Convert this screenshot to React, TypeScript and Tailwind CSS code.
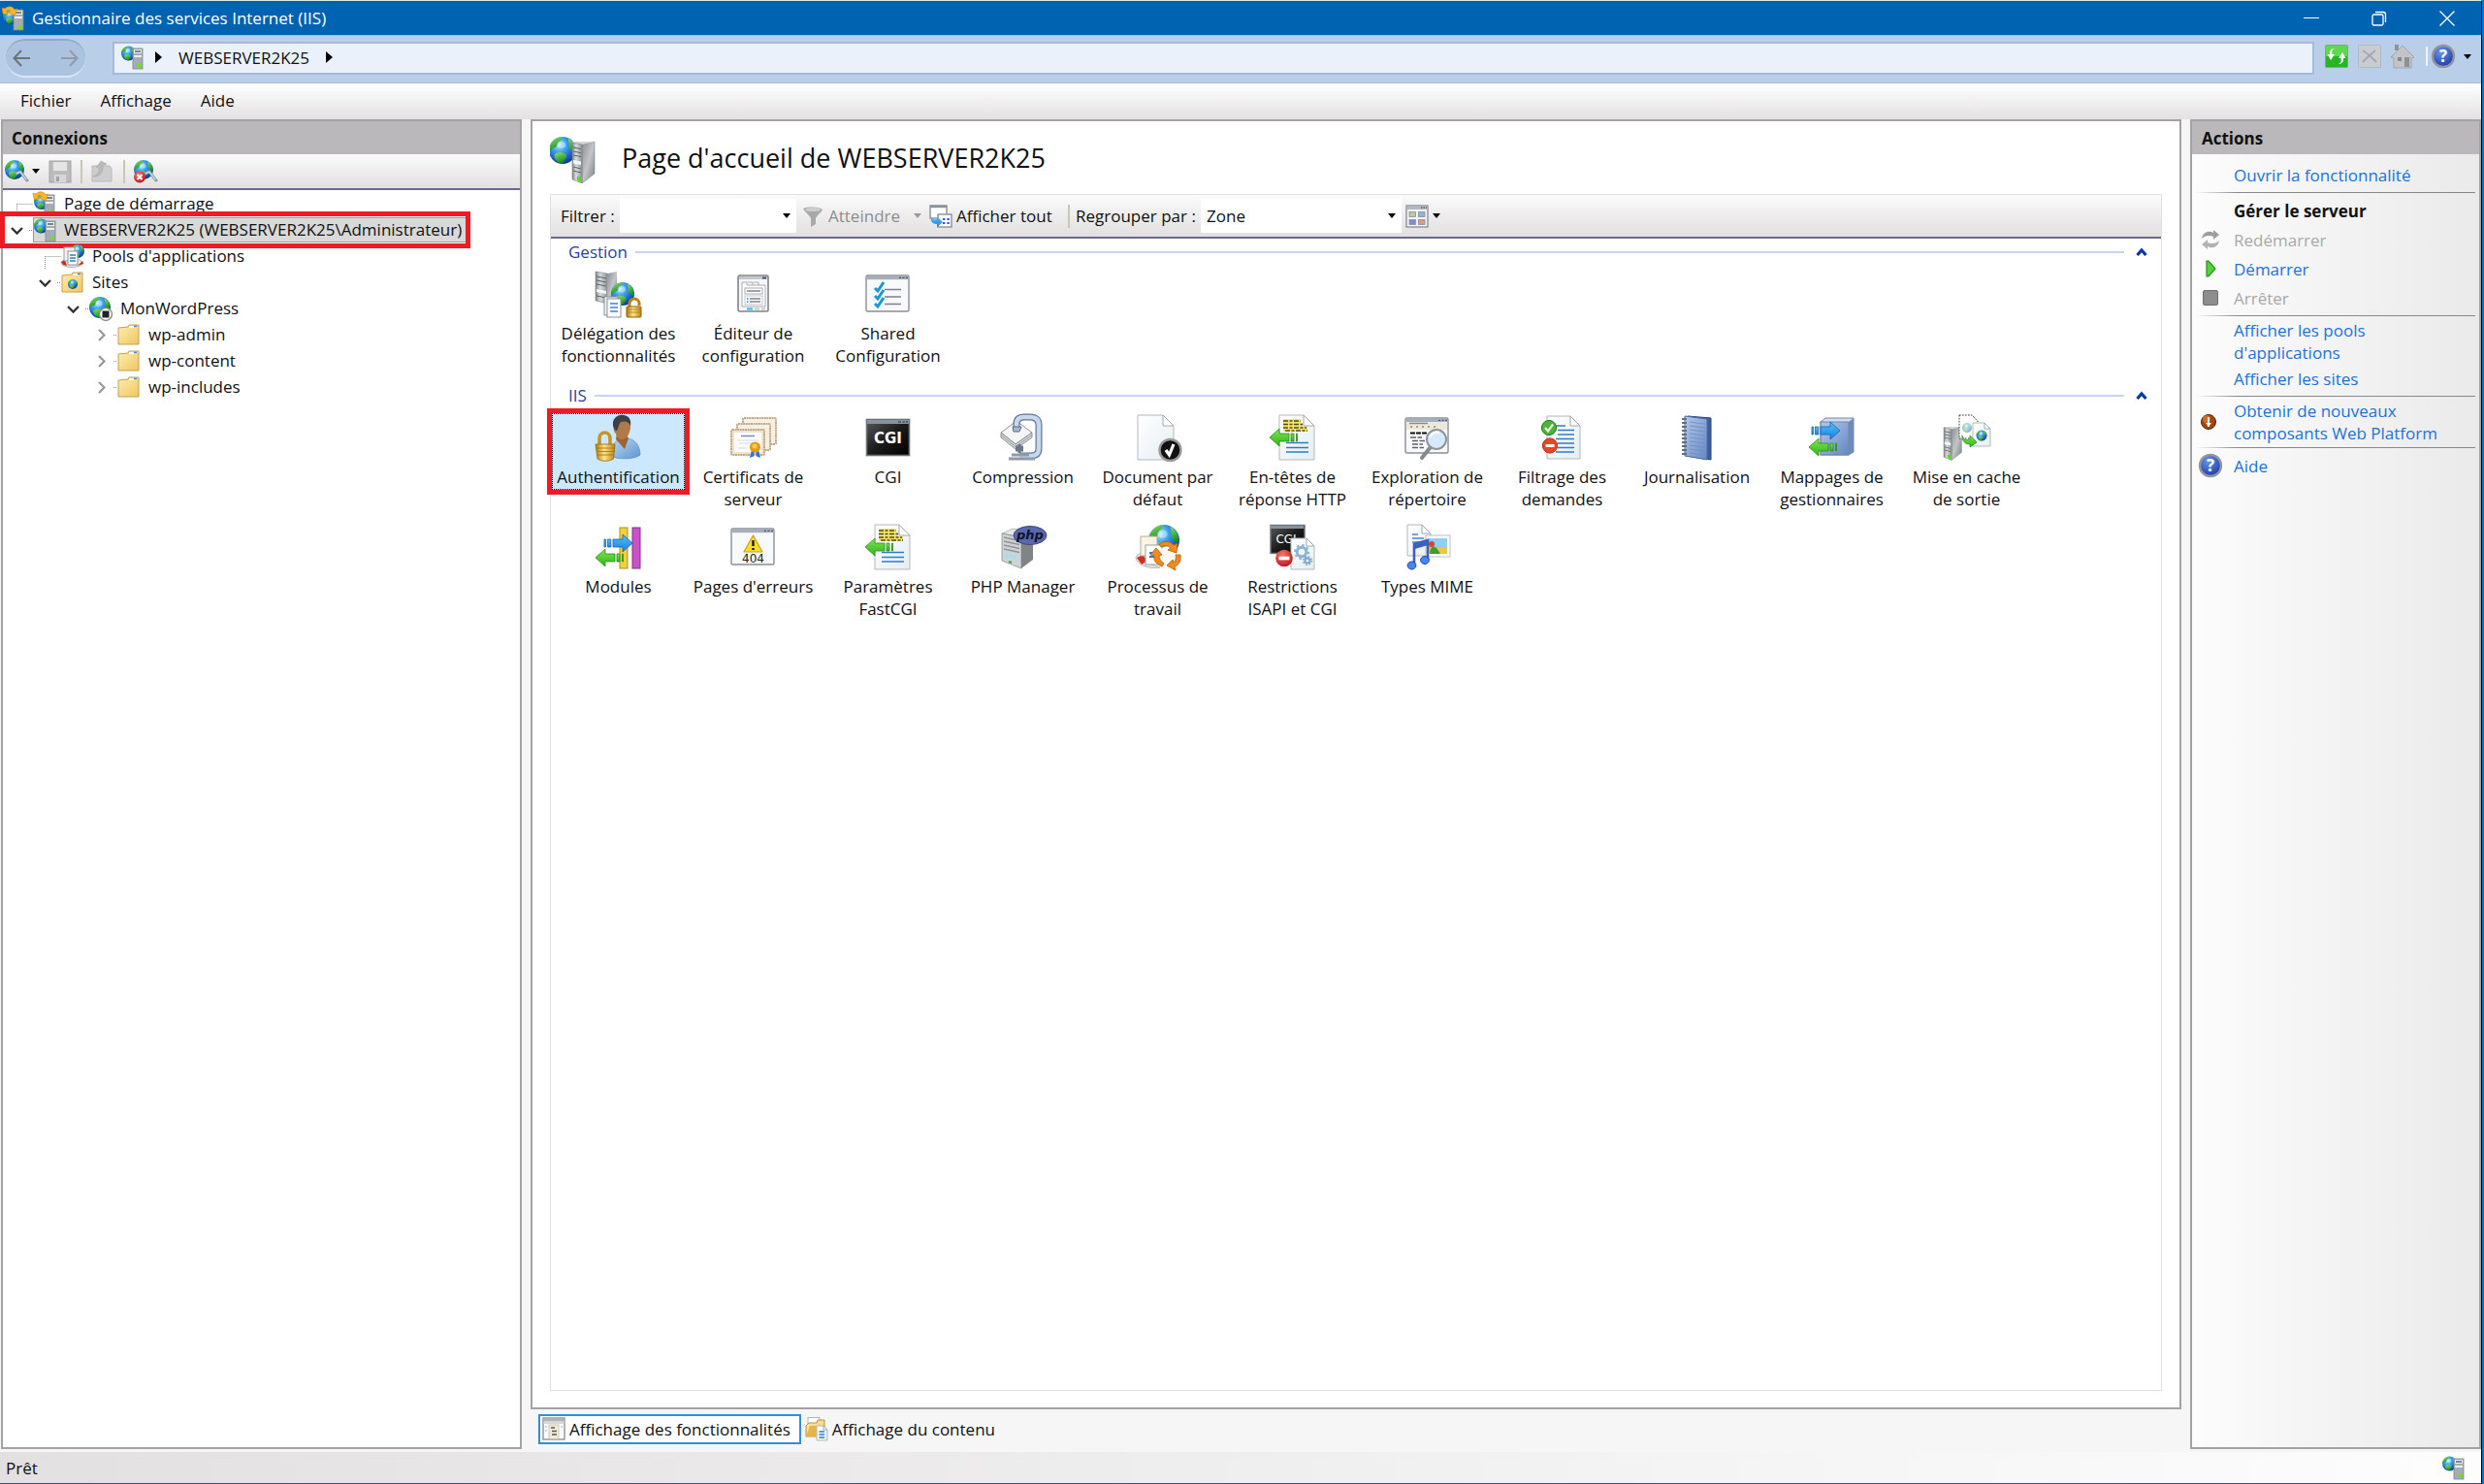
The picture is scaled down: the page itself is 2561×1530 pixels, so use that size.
import { useState } from "react";
import type { ReactNode } from "react";

type IconProps = { className?: string };

/* ---------- shared drawing parts ---------- */

function SharedGradients() {
  return (
    <svg width="0" height="0" className="absolute" aria-hidden="true">
      <defs>
        <radialGradient id="sea" cx="0.38" cy="0.3" r="0.75">
          <stop offset="0" stopColor="#b5ecff" />
          <stop offset="0.35" stopColor="#3fa4ee" />
          <stop offset="0.75" stopColor="#1a58c4" />
          <stop offset="1" stopColor="#0c3488" />
        </radialGradient>
        <linearGradient id="land" x1="0" y1="0" x2="0.4" y2="1">
          <stop offset="0" stopColor="#8fe070" />
          <stop offset="1" stopColor="#16901c" />
        </linearGradient>
        <linearGradient id="metalFront" x1="0" y1="0" x2="1" y2="0">
          <stop offset="0" stopColor="#7f8588" />
          <stop offset="0.4" stopColor="#d9dddf" />
          <stop offset="1" stopColor="#8e9498" />
        </linearGradient>
        <linearGradient id="metalSide" x1="0" y1="0" x2="1" y2="1">
          <stop offset="0" stopColor="#8b8e90" />
          <stop offset="0.5" stopColor="#c3c6c8" />
          <stop offset="1" stopColor="#7b7e80" />
        </linearGradient>
        <linearGradient id="gold" x1="0" y1="0" x2="1" y2="0">
          <stop offset="0" stopColor="#b07a10" />
          <stop offset="0.45" stopColor="#ffe58a" />
          <stop offset="1" stopColor="#b98416" />
        </linearGradient>
        <linearGradient id="folder" x1="0" y1="0" x2="1" y2="1">
          <stop offset="0" stopColor="#fdeeb0" />
          <stop offset="1" stopColor="#f0c660" />
        </linearGradient>
        <linearGradient id="greenArrow" x1="0" y1="0" x2="0" y2="1">
          <stop offset="0" stopColor="#7fe84c" />
          <stop offset="1" stopColor="#2fb31c" />
        </linearGradient>
        <linearGradient id="blueArrow" x1="0" y1="0" x2="0" y2="1">
          <stop offset="0" stopColor="#4bc4ff" />
          <stop offset="1" stopColor="#1c7fdc" />
        </linearGradient>
        <linearGradient id="paper" x1="0" y1="0" x2="1" y2="1">
          <stop offset="0" stopColor="#ffffff" />
          <stop offset="1" stopColor="#e4eef2" />
        </linearGradient>
        <linearGradient id="darkScreen" x1="0" y1="0" x2="1" y2="1">
          <stop offset="0" stopColor="#5a5a5a" />
          <stop offset="0.5" stopColor="#1c1c1c" />
          <stop offset="1" stopColor="#000000" />
        </linearGradient>
        <linearGradient id="bookCover" x1="0" y1="0" x2="1" y2="1">
          <stop offset="0" stopColor="#b3c8ea" />
          <stop offset="1" stopColor="#6487c2" />
        </linearGradient>
        <radialGradient id="helpBall" cx="0.4" cy="0.3" r="0.8">
          <stop offset="0" stopColor="#6b95ee" />
          <stop offset="1" stopColor="#12319e" />
        </radialGradient>
        <radialGradient id="redBall" cx="0.4" cy="0.3" r="0.8">
          <stop offset="0" stopColor="#f07a66" />
          <stop offset="1" stopColor="#b80d14" />
        </radialGradient>
        <linearGradient id="shirt" x1="0" y1="0" x2="1" y2="1">
          <stop offset="0" stopColor="#b9dcf8" />
          <stop offset="1" stopColor="#5f93cf" />
        </linearGradient>
      </defs>
    </svg>
  );
}

function GlobeShape({ cx, cy, r }: { cx: number; cy: number; r: number }) {
  return (
    <g transform={`translate(${cx} ${cy}) scale(${r / 10})`}>
      <circle r="10" fill="url(#sea)" />
      <path
        d="M-8.6 -4.6C-6.6 -8.2 -3.2 -9.7 0 -9.8C-0.8 -7.6 -1.6 -6.8 -3 -6C-3.6 -3.4 -4.6 -1.8 -7.2 -1.6C-8 -0.6 -9 1.2 -9.8 0C-9.8 -2 -9.4 -3.4 -8.6 -4.6Z"
        fill="url(#land)"
      />
      <path d="M-6 3C-3 0.6 0.6 1.2 2.6 3.2C3.6 5.6 1 7.4 0 9.6C-3.6 9.2 -6 7.4 -6 3Z" fill="url(#land)" />
      <path d="M4 -8.8C7.4 -7.2 9.6 -3.8 9.8 0C8.8 2.6 7.6 1 6 -0.4C4.2 -2.4 5.4 -4.6 4 -8.8Z" fill="url(#land)" />
      <ellipse cx="-1" cy="-4" rx="3.4" ry="2.6" fill="#fff" opacity="0.35" />
    </g>
  );
}

// tower: front face with drive slots and a green power light, side face to the right
function TowerShape({ x, y, s = 1 }: { x: number; y: number; s?: number }) {
  return (
    <g transform={`translate(${x} ${y}) scale(${s})`}>
      <path d="M10 3L23 0V33L10 43Z" fill="url(#metalSide)" stroke="#808386" strokeWidth="0.6" />
      <path d="M0 0L23 0L10 3L0 2Z" fill="#d3d6d7" />
      <path d="M0 1L10 3V43L0 39Z" fill="url(#metalFront)" stroke="#7c8184" strokeWidth="0.6" />
      <path d="M1 6L9 7.6M1 10L9 11.6M1 14L9 15.6M1 26L9 28M1 30L9 32" stroke="#5d6467" strokeWidth="1" />
      <path d="M1 19L9 20.6V24L1 22.4Z" fill="#f1f6f7" />
      <path d="M5 36L10 37V42L5 40Z" fill="#57d916" />
    </g>
  );
}

function PageShape({ x, y, w, h, fold = 8 }: { x: number; y: number; w: number; h: number; fold?: number }) {
  return (
    <g>
      <path
        d={`M${x} ${y}H${x + w - fold}L${x + w} ${y + fold}V${y + h}H${x}Z`}
        fill="url(#paper)"
        stroke="#b4b8ba"
        strokeWidth="1"
      />
      <path
        d={`M${x + w - fold} ${y}V${y + fold}H${x + w}Z`}
        fill="#fff"
        stroke="#a4a8aa"
        strokeWidth="1"
      />
    </g>
  );
}

function WindowShape({ x, y, w, h }: { x: number; y: number; w: number; h: number }) {
  return (
    <g>
      <rect x={x} y={y} width={w} height={h} rx="1.5" fill="#f8f9fa" stroke="#8b9096" strokeWidth="1.4" />
      <rect x={x + 1} y={y + 0.8} width={w - 2} height="3.4" fill="#a5aeba" />
      <path d={`M${x + w - 10} ${y + 2.4}h2m1.5 0h2m1.5 0h2`} stroke="#4c5a78" strokeWidth="1.4" />
    </g>
  );
}

function LeftArrow() {
  return (
    <g fill="url(#greenArrow)" stroke="#2b8c1e" strokeWidth="0.8">
      <path d="M0 9L10 0V5H20V13H10V18Z" />
      <path d="M22 5H25V13H22Z" />
      <path d="M27.500 5H28.500V13H27.500Z" />
    </g>
  );
}

function RightArrow() {
  return (
    <g fill="url(#blueArrow)" stroke="#1a62ae" strokeWidth="0.8">
      <path d="M29 9L19 0V5H9V13H19V18Z" />
      <path d="M3.4 5H6.8V13H3.4Z" />
      <path d="M0 5H1.4V13H0Z" />
    </g>
  );
}

/* ---------- feature icons, 48 x 48 ---------- */

function FeatureSvg({ children }: { children: ReactNode }) {
  return (
    <svg width="48" height="48" viewBox="0 0 48 48" className="shrink-0 overflow-visible" aria-hidden="true">
      {children}
    </svg>
  );
}

const DelegationIcon = () => (
  <FeatureSvg>
    <path d="M0 1L12 3V34L0 31Z" fill="url(#metalFront)" stroke="#7c8184" strokeWidth="0.6" />
    <path d="M12 3L22 1V27L12 34Z" fill="url(#metalSide)" />
    <path d="M1 6L11 8M1 10L11 12M1 14L11 16M1 26L11 28" stroke="#5d6467" />
    <path d="M1 19L11 21V24L1 22Z" fill="#f3f7f8" />
    <GlobeShape cx={28} cy={24} r={12} />
    <rect x="9" y="27" width="14" height="19" fill="#eef1f4" stroke="#8a8f94" />
    <rect x="12" y="29" width="14" height="19" fill="#fff" stroke="#8a8f94" />
    <path d="M15 34H23M15 38H23M15 42H23" stroke="#3f7fd4" strokeWidth="1.6" />
    <path d="M35 37V34a5 5 0 0 1 10 0V36" fill="none" stroke="#b98416" strokeWidth="3" />
    <rect x="32" y="37" width="15" height="11" rx="1" fill="url(#gold)" stroke="#8f6209" />
    <path d="M33 40H46M33 43H46" stroke="#b07a10" strokeWidth="0.8" />
  </FeatureSvg>
);

const ConfigEditorIcon = () => (
  <FeatureSvg>
    <rect x="8" y="5" width="31" height="37" rx="1.5" fill="#f6f7f8" stroke="#808488" strokeWidth="1.6" />
    <path d="M9 7.5H38" stroke="#c3c8ce" strokeWidth="3" />
    <path d="M33 7.5H37" stroke="#3d5878" strokeWidth="2" />
    <path d="M12 12H17V15H36V37H12Z" fill="#fdfdfd" stroke="#a8adb2" />
    <path d="M18 12H23V15M24 12H29V15" fill="none" stroke="#a8adb2" />
    <rect x="15" y="18" width="18" height="6" fill="#fff" stroke="#a8adb2" />
    <path d="M17 21H31M20 29H31M20 32H31" stroke="#7d8388" strokeWidth="1.4" />
    <rect x="15" y="26" width="18" height="9" fill="none" stroke="#c1c5c9" />
    <path d="M17 29H18.5M17 32H18.5" stroke="#21b8e0" strokeWidth="1.8" />
    <path d="M17 39.5H23" stroke="#22bdf2" strokeWidth="2" />
    <path d="M25 39.5H30M32 39.5H36" stroke="#c7cbce" strokeWidth="2" />
  </FeatureSvg>
);

const SharedConfigIcon = () => (
  <FeatureSvg>
    <WindowShape x={1} y={5} w={44} h={37} />
    <path d="M20 19.5H37M20 27H37M20 34.5H37" stroke="#837c98" strokeWidth="1.4" />
    <path d="M10 18L13 21L19 12M10 26L13 29L19 20M10 34L13 37L19 28" fill="none" stroke="#1b98d0" strokeWidth="3" />
  </FeatureSvg>
);

const AuthIcon = () => (
  <FeatureSvg>
    <path d="M16 43C16 30 22 25 31 25C41 25 46 33 46 42C40 47 22 47 16 43Z" fill="url(#shirt)" stroke="#6a94c4" strokeWidth="0.8" />
    <path d="M21 26L30 36L34 25L30 19H22Z" fill="#9a6436" />
    <path d="M19 12C19 5 23 2 28 2C34 2 37 7 36 14C35 21 32 26 28 26C24 26 22 24 21 20C19 19 18 15 19 12Z" fill="#b07a48" />
    <path d="M18 12C17 4 23 0 29 1C35 2 37 6 36 12C34 7 30 7 26 8C24 10 24 13 22 17C20 17 19 15 18 12Z" fill="#3d4045" />
    <path d="M4 32V25a5.5 6 0 0 1 11 0V32" fill="none" stroke="#c49428" strokeWidth="3.6" />
    <path d="M0 31H20L18.5 46C14 49 6 49 2 46Z" fill="url(#gold)" stroke="#94670c" strokeWidth="0.8" />
    <path d="M1 35H19M1 38.5H19M2 42H18" stroke="#a8760f" strokeWidth="0.9" />
  </FeatureSvg>
);

const CertificateIcon = () => (
  <FeatureSvg>
    <rect x="13" y="4" width="34" height="27" rx="1" fill="#f6efe2" stroke="#c0a987" strokeWidth="2" strokeDasharray="2 0.6" />
    <rect x="7" y="10" width="34" height="27" rx="1" fill="#f6efe2" stroke="#c0a987" strokeWidth="2" strokeDasharray="2 0.6" />
    <rect x="1" y="16" width="34" height="26" rx="1" fill="#efe3cf" stroke="#c0a987" strokeWidth="2" strokeDasharray="2 0.6" />
    <rect x="4" y="19" width="28" height="20" fill="#fff" />
    <path d="M11 22.5H25" stroke="#7d8fc0" strokeWidth="1.6" />
    <path d="M7 27H29M9 30H27M8 35H17" stroke="#d3d7e2" />
    <path d="M22 37L20 45L24 43.5L25 38M29 37L31 45L27 43.5L26 38" fill="#2b72e8" />
    <circle cx="25.5" cy="34" r="5.6" fill="#e79a12" />
    <circle cx="25" cy="33" r="2.6" fill="#f8c95a" />
  </FeatureSvg>
);

const CgiIcon = () => (
  <FeatureSvg>
    <rect x="1.5" y="5.5" width="44" height="37" fill="url(#darkScreen)" stroke="#6d7378" strokeWidth="1.6" />
    <rect x="2" y="6" width="43" height="4" fill="#86929c" />
    <path d="M34 8H37M38.5 8H41M42 8H44" stroke="#3a526c" strokeWidth="1.6" />
    <text x="23.5" y="30" textAnchor="middle" fontSize="15" fontWeight="700" fill="#fff" fontFamily="'DejaVu Sans', sans-serif">
      CGI
    </text>
  </FeatureSvg>
);

const CompressionIcon = () => (
  <FeatureSvg>
    <path d="M1 19L17 7L33 19L16 31Z" fill="#f4f5f6" stroke="#8b9196" />
    <path d="M1 19V24L16 36L33 24V19L16 31Z" fill="#d4d8db" stroke="#8b9196" />
    <path d="M1 21.5L16 33.5L33 21.5" fill="none" stroke="#8b9196" strokeWidth="0.8" />
    <path
      d="M17 13V10C17 5 20 3 25 3H31C37 3 40 6 40 11V35C40 41 37 43 31 43H20"
      fill="none"
      stroke="#5f769a"
      strokeWidth="7"
    />
    <path
      d="M17 13V10C17 5 20 3 25 3H31C37 3 40 6 40 11V35C40 41 37 43 31 43H20"
      fill="none"
      stroke="#c8d8ea"
      strokeWidth="4.6"
    />
    <path d="M13 13H22L20 18H14Z" fill="#a9b8cc" stroke="#5d6c80" />
    <path d="M20 31V40M16 34H24M16 37H24" stroke="#6b7786" strokeWidth="3" />
    <path d="M12 42H30M9 46H36" stroke="#8f9aa8" strokeWidth="3" />
  </FeatureSvg>
);

const DefaultDocIcon = () => (
  <FeatureSvg>
    <PageShape x={3} y={1} w={37} h={46} fold={11} />
    <circle cx="36.5" cy="37" r="11" fill="#111" stroke="#9a9a9a" strokeWidth="2.4" />
    <path d="M32 37L35.5 42L40 31" fill="none" stroke="#fff" strokeWidth="3.2" />
  </FeatureSvg>
);

const HeadersIcon = () => (
  <FeatureSvg>
    <PageShape x={10} y={1} w={36} h={46} fold={11} />
    <path d="M14 5H32V9H34V13H39V18H14Z" fill="#f6e56a" />
    <path d="M14 7H32M14 10.5H34M14 14H38M16 17H39" stroke="#4d4a22" strokeWidth="1.5" strokeDasharray="5 1.5 3 1.5" />
    <path d="M17 29.500H40M17 34.5H40M17 39H40" stroke="#2f7cc8" strokeWidth="1.6" />
    <g transform="translate(0 15)">
      <LeftArrow />
    </g>
  </FeatureSvg>
);

const BrowseIcon = () => (
  <FeatureSvg>
    <WindowShape x={1} y={4} w={44} h={36} />
    <rect x="2" y="9" width="42" height="7" fill="#ece9d8" />
    <path d="M5 9.5H24M6 13H8M12 13H14M18 13H20M24 13H26M30 13H32" stroke="#8b8b80" strokeWidth="1.4" />
    <path d="M6 19.5H24" stroke="#111" strokeWidth="2" strokeDasharray="5 1" />
    <path d="M6 24H18M8 27.5H21M8 31H19M8 34.5H20" stroke="#5f6468" strokeWidth="1.4" strokeDasharray="6 1.5" />
    <path d="M26 35L18 45" stroke="#85898c" strokeWidth="4" strokeLinecap="round" />
    <circle cx="33" cy="26" r="10" fill="#d5ebfc" stroke="#8e9499" strokeWidth="2" />
    <path d="M26 24a8 7 0 0 1 10-5" fill="none" stroke="#fff" strokeWidth="2.4" />
  </FeatureSvg>
);

const FilterRequestsIcon = () => (
  <FeatureSvg>
    <PageShape x={8} y={2} w={34} h={44} fold={10} />
    <path d="M17 12H27M19 16.5H36M19 21H36M17 25.5H36M19 30H36M19 34.5H36M17 39H36" stroke="#2f7cc8" strokeWidth="1.7" />
    <circle cx="10" cy="14" r="7.6" fill="#4ab338" stroke="#2c7a22" />
    <path d="M6 14L9 17.5L14 10.5" fill="none" stroke="#e9ffe2" strokeWidth="2.2" />
    <circle cx="11" cy="32.5" r="7.6" fill="#ea4526" stroke="#b02a12" />
    <path d="M6.5 32.5H15.5" stroke="#fff" strokeWidth="3" />
  </FeatureSvg>
);

const JournalIcon = () => (
  <FeatureSvg>
    <path d="M14 2L38 4V47L14 43Z" fill="#3e5f9e" stroke="#2a4478" />
    <path d="M11 2L34 5V47L11 43Z" fill="url(#bookCover)" stroke="#4c6aa4" />
    <path d="M16 8L32 10M16 12L32 14M16 16L32 18M16 20L32 22M16 24L32 26M16 28L32 30M16 32L32 34M16 36L32 38M16 40L32 42" stroke="#6d8cc2" strokeWidth="0.8" />
    <path d="M8 5H13M8 9H13M8 13H13M8 17H13M8 21H13M8 25H13M8 29H13M8 33H13M8 37H13M8 41H13" stroke="#676d78" strokeWidth="1.8" />
  </FeatureSvg>
);

const MappingIcon = () => (
  <FeatureSvg>
    <path d="M12 8L17 4H46L41 8V42H12Z" fill="#cfdcf0" />
    <path d="M41 8L46 4V39L41 42Z" fill="#6f8bb8" />
    <rect x="12" y="8" width="29" height="34" fill="url(#bookCover)" stroke="#7388ac" />
    <path d="M12 8L17 4H46V39L41 42H12Z" fill="none" stroke="#7388ac" />
    <g transform="translate(3 8)">
      <RightArrow />
    </g>
    <g transform="translate(0 25)">
      <LeftArrow />
    </g>
  </FeatureSvg>
);

const CacheIcon = () => (
  <FeatureSvg>
    <TowerShape x={0} y={13} s={0.8} />
    <path d="M16 1H29L35 7V25H16Z" fill="#fff" stroke="#333" strokeDasharray="1.6 1.4" />
    <g opacity="0.45">
      <GlobeShape cx={24} cy={14} r={5} />
    </g>
    <PageShape x={30} y={9} w={18} h={24} fold={6} />
    <GlobeShape cx={39} cy={22} r={5.5} />
    <path d="M19 22C20 27 24 27 27 26V22L34 29L27 34V31C22 31 19 28 19 22Z" fill="url(#greenArrow)" stroke="#2b8c1e" strokeWidth="0.8" />
  </FeatureSvg>
);

const ModulesIcon = () => (
  <FeatureSvg>
    <rect x="25" y="4" width="8" height="42" fill="#f2d13c" stroke="#b09018" />
    <rect x="38" y="4" width="8" height="42" fill="#c654c4" stroke="#8b2c90" />
    <g transform="translate(9 11)">
      <RightArrow />
    </g>
    <g transform="translate(0 26)">
      <LeftArrow />
    </g>
  </FeatureSvg>
);

const ErrorPagesIcon = () => (
  <FeatureSvg>
    <WindowShape x={1} y={5} w={44} h={37} />
    <path d="M23.5 12L33 29H14Z" fill="#ffdb2e" stroke="#c9a112" strokeWidth="1.2" strokeLinejoin="round" />
    <path d="M23.5 17V23M23.5 25V27" stroke="#1a1a1a" strokeWidth="2.4" />
    <text x="23.5" y="40" textAnchor="middle" fontSize="12" fill="#222" fontFamily="'DejaVu Sans', sans-serif">
      404
    </text>
  </FeatureSvg>
);

const PhpIcon = () => (
  <FeatureSvg>
    <path d="M2 10L13 5L34 8L22 14Z" fill="#e4e6e7" stroke="#94989a" strokeWidth="0.6" />
    <path d="M2 10L22 14V46L2 38Z" fill="#cfd3d5" stroke="#8b8f91" strokeWidth="0.8" />
    <path d="M22 14L34 8V37L22 46Z" fill="#808486" />
    <path d="M4 14L20 17.5M4 18L20 21.5M4 22L20 25.5M4 26L20 29.5" stroke="#8f9496" strokeWidth="1.4" />
    <path d="M5 30L17 33V37L5 34Z" fill="#a9dcee" />
    <path d="M9 39L12 40" stroke="#2fae3c" strokeWidth="2" />
    <ellipse cx="31" cy="12" rx="17" ry="9.5" fill="#5b67ad" stroke="#3c4780" />
    <text x="31" y="16" textAnchor="middle" fontSize="13" fontStyle="italic" fontWeight="700" fill="#10142c" fontFamily="'DejaVu Sans', sans-serif">
      php
    </text>
  </FeatureSvg>
);

const WorkerIcon = () => (
  <FeatureSvg>
    <GlobeShape cx={30} cy={17} r={16} />
    <path d="M1 35C3 29 9 30 14 32V41L26 45C16 47 2 43 1 35Z" fill="#e6e6e6" stroke="#b9b9b9" />
    <path d="M2 35L8 32L13 38L7 42Z" fill="#cf2e22" />
    <rect x="6" y="13" width="17" height="20" fill="#faf4e4" stroke="#b9ae94" />
    <rect x="11" y="22" width="17" height="20" fill="#fff" stroke="#9aa0a6" />
    <path d="M15 30H19M15 34H21" stroke="#2f7cc8" strokeWidth="1.8" />
    <circle cx="34" cy="33" r="10" fill="#fdf6f2" />
    <g fill="#f08a1c" stroke="#b55a08" strokeWidth="0.8">
      <path d="M25 21C31 17 37 18 40 22L44 20L43 30L34 27L37 25C34 22 30 22 27 24Z" />
      <path d="M47 32C48 39 45 43 41 44L42 48L33 43L39 37L40 40C42 38 43 35 42 32Z" />
      <path d="M28 44C21 41 19 37 20 33L16 32L22 25L28 32L25 33C25 36 27 39 30 41Z" />
    </g>
  </FeatureSvg>
);

const RestrictionsIcon = () => (
  <FeatureSvg>
    <rect x="1" y="1.500" width="35" height="29" fill="url(#darkScreen)" stroke="#6d7378" strokeWidth="1.4" />
    <rect x="1" y="2" width="34" height="3" fill="#86929c" />
    <text x="17" y="20" textAnchor="middle" fontSize="12" fill="#fff" fontFamily="'DejaVu Sans', sans-serif">
      CGI
    </text>
    <PageShape x={22} y={15} w={24} h={32} fold={8} />
    <circle cx="33" cy="29" r="4.8" fill="none" stroke="#8fb4d0" strokeWidth="3" />
    <circle cx="33" cy="29" r="7" fill="none" stroke="#8fb4d0" strokeWidth="2" strokeDasharray="2.5 3" />
    <circle cx="39" cy="38" r="2.6" fill="none" stroke="#7fa4c4" strokeWidth="2" />
    <circle cx="39" cy="38" r="4.4" fill="none" stroke="#7fa4c4" strokeWidth="1.6" strokeDasharray="1.6 1.9" />
    <circle cx="15" cy="35.5" r="8.8" fill="url(#redBall)" />
    <path d="M9.5 35.5H20.5" stroke="#fff" strokeWidth="3.6" />
  </FeatureSvg>
);

const MimeIcon = () => (
  <FeatureSvg>
    <PageShape x={3} y={1} w={24} h={32} fold={9} />
    <path d="M8 11H14M8 15H20M8 19H18" stroke="#4a86cc" strokeWidth="1.5" />
    <rect x="22" y="12" width="25" height="22" fill="#fff" stroke="#b9bdc0" />
    <rect x="25" y="15" width="19" height="16" fill="#8ecdf4" />
    <rect x="25" y="25" width="19" height="6" fill="#e7c93c" />
    <path d="M26 31C27 22 31 20 37 31Z" fill="#3a9c34" />
    <circle cx="28" cy="21" r="3" fill="#d8481c" />
    <path d="M10 42V21L24 17V37" fill="none" stroke="#3c5fc0" strokeWidth="2.6" />
    <path d="M10 24L24 20" stroke="#3c5fc0" strokeWidth="4" />
    <ellipse cx="7.5" cy="43" rx="4.4" ry="4" fill="#4a86f0" stroke="#2444a0" />
    <ellipse cx="21" cy="37.5" rx="4.4" ry="4" fill="#4a86f0" stroke="#2444a0" />
  </FeatureSvg>
);

/* ---------- small icons, 24 x 24 ---------- */

function SmallSvg({ children, className = "" }: IconProps & { children: ReactNode }) {
  return (
    <svg width="24" height="24" viewBox="0 0 24 24" className={`shrink-0 overflow-visible ${className}`} aria-hidden="true">
      {children}
    </svg>
  );
}

function SmallTower() {
  return (
    <g>
      <rect x="12" y="3" width="10" height="21" fill="#a3adb3" stroke="#7e878c" strokeWidth="0.8" />
      <path d="M13 4H21V8H13ZM13 10H21V12H13Z" fill="#e8eef0" />
      <path d="M14 6H20" stroke="#4d565b" strokeWidth="1.4" />
      <rect x="17" y="19" width="4" height="4" fill="#6fe01f" />
    </g>
  );
}

const ServerIcon = ({ className }: IconProps) => (
  <SmallSvg className={className}>
    <GlobeShape cx={7.5} cy={8} r={7.5} />
    <SmallTower />
  </SmallSvg>
);

const StartPageIcon = ({ className }: IconProps) => (
  <SmallSvg className={className}>
    <GlobeShape cx={9} cy={10} r={8} />
    <SmallTower />
    <path d="M0 1L3 2C6 -1 11 -1 13 3L16 2L13 9L6 6L9 5C8 3 6 3 5 4L6 8L1 7Z" fill="#f7b42c" stroke="#cf8a12" strokeWidth="0.6" />
  </SmallSvg>
);

const PoolsIcon = () => (
  <SmallSvg>
    <GlobeShape cx={17} cy={7} r={7} />
    <ellipse cx="11" cy="19" rx="11" ry="4.5" fill="#e9e9e9" stroke="#b4b4b4" />
    <path d="M0 18L4 16L6 22L2 21ZM17 22L22 17L23 20Z" fill="#d0271f" />
    <rect x="3" y="3" width="11" height="14" fill="#f2f2f2" stroke="#999" />
    <rect x="7" y="7" width="10" height="14" fill="#fff" stroke="#8b9096" />
    <path d="M9 11H15M9 14H15M9 17H15" stroke="#2f7cc8" strokeWidth="1.6" />
  </SmallSvg>
);

const FolderIcon = ({ site = false }: { site?: boolean }) => (
  <SmallSvg>
    <path d="M1 5L11 4L12 2H22V22H1Z" fill="url(#folder)" stroke="#c9a04a" />
    <path d="M12 4H20" stroke="#fff" strokeWidth="1.6" />
    <path d="M17 3.5H20" stroke="#4a86cc" strokeWidth="1.6" />
    {site && <GlobeShape cx={12} cy={14} r={5} />}
  </SmallSvg>
);

const StoppedSiteIcon = () => (
  <SmallSvg>
    <GlobeShape cx={11} cy={11} r={11} />
    <circle cx="17" cy="18" r="6.5" fill="#fff" stroke="#8b8b8b" strokeWidth="1.4" />
    <rect x="13.5" y="14.5" width="7" height="7" fill="#222" />
  </SmallSvg>
);

const ConnectIcon = ({ remove = false }: { remove?: boolean }) => (
  <SmallSvg>
    <GlobeShape cx={10} cy={10} r={10} />
    <path d="M11 14L16 12L19 16L22 20L24 22" fill="none" stroke="#8ba6ae" strokeWidth="3" />
    <path d="M12 14L16 12L19 16L22 20" fill="none" stroke="#e1edf0" strokeWidth="1" />
    {remove && (
      <>
        <circle cx="6" cy="17.5" r="6" fill="url(#redBall)" />
        <path d="M3.5 15L8.5 20M8.5 15L3.5 20" stroke="#fff" strokeWidth="2" />
      </>
    )}
  </SmallSvg>
);

const SaveIcon = () => (
  <SmallSvg>
    <rect x="1" y="1" width="22" height="22" fill="#bdbcbd" stroke="#a3a2a3" />
    <rect x="5" y="2" width="14" height="9" fill="#e6e5e6" />
    <rect x="6" y="15" width="12" height="8" fill="#d8d7d8" />
    <rect x="8" y="17" width="3" height="5" fill="#a3a2a3" />
  </SmallSvg>
);

const UpIcon = () => (
  <SmallSvg>
    <path d="M1 6H19L21 9V22H1Z" fill="#cfcecf" stroke="#bab9ba" />
    <path d="M2 17C7 15 9 11 8 7L5 8L10 1L16 4L12 6C13 12 9 17 2 17Z" fill="#bcbbbc" stroke="#a9a8a9" strokeWidth="0.6" />
  </SmallSvg>
);

const RefreshIcon = () => (
  <SmallSvg>
    <rect x="0.5" y="0.5" width="23" height="23" rx="1" fill="#5fd94c" stroke="#7fa88a" />
    <rect x="1" y="12" width="22" height="11" fill="#27b523" />
    <path d="M10 4C7 5 7 8 7.5 10H10L6 16L2.5 10H5C4.5 6 7 4 10 4Z" fill="#fff" />
    <path d="M14 20C17 19 17 16 16.5 14H14L18 8L21.5 14H19C19.5 18 17 20 14 20Z" fill="#fff" />
  </SmallSvg>
);

const StopIcon = () => (
  <SmallSvg>
    <rect x="0.5" y="0.5" width="23" height="23" rx="1" fill="#c9cdd2" stroke="#b3b8be" />
    <path d="M5 6C10 9 15 14 19 18M18 6C14 9 9 14 5 18" fill="none" stroke="#a2a7ac" strokeWidth="2" />
  </SmallSvg>
);

const HomeIcon = () => (
  <SmallSvg>
    <path d="M4 0H8V6H4Z" fill="#8f9296" />
    <path d="M0 13L12 1L24 13L21 14V24H3V14Z" fill="#c2c4c7" stroke="#a2a5a9" />
    <rect x="7" y="13" width="4" height="4" fill="#85888c" />
    <rect x="14" y="13" width="5" height="10" fill="#8d9094" />
  </SmallSvg>
);

const HelpIcon = () => (
  <SmallSvg>
    <circle cx="12" cy="12" r="11" fill="url(#helpBall)" stroke="#92959c" strokeWidth="2.4" />
    <text x="12" y="18" textAnchor="middle" fontSize="17" fontWeight="700" fill="#fff" fontFamily="'Open Sans', sans-serif">
      ?
    </text>
  </SmallSvg>
);

const FunnelIcon = () => (
  <SmallSvg>
    <path d="M2 4C8 2 17 2 22 5C20 9 16 11 15 14V20L10 23V14C8 10 4 8 2 4Z" fill="#aaa9aa" />
    <ellipse cx="12" cy="5" rx="8" ry="2" fill="#cfcecf" />
  </SmallSvg>
);

const ShowAllIcon = () => (
  <SmallSvg>
    <rect x="1" y="1" width="17" height="13" fill="#fff" stroke="#8a9098" strokeWidth="1.4" />
    <path d="M1 2H18" stroke="#8a9098" strokeWidth="2.4" />
    <rect x="9" y="10" width="14" height="13" fill="#fff" stroke="#8a9098" strokeWidth="1.4" />
    <path d="M14 15H21M14 19H21" stroke="#3a5ad0" strokeWidth="2" strokeDasharray="2.4 2" />
    <path d="M2 12C3 15 5 16 8 15V12L14 18L8 23V20C3 20 1 17 2 12Z" fill="url(#blueArrow)" />
  </SmallSvg>
);

const ViewIcon = () => (
  <SmallSvg>
    <rect x="1" y="1" width="22" height="22" fill="#f4f4f6" stroke="#8d9299" strokeWidth="1.4" />
    <rect x="1.5" y="1.5" width="21" height="3.5" fill="#b2b9c3" />
    <path d="M16 3H22" stroke="#5e6b80" strokeWidth="1.6" strokeDasharray="1.5 1" />
    <g stroke="#8b9098" strokeWidth="0.8">
      <rect x="4" y="7.5" width="6.5" height="5" fill="#b9cc94" />
      <rect x="13.5" y="7.5" width="6.5" height="5" fill="#84b9dc" />
      <rect x="4" y="15.5" width="6.5" height="5" fill="#8487dc" />
      <rect x="13.5" y="15.5" width="6.5" height="5" fill="#e09880" />
    </g>
  </SmallSvg>
);

const FeaturesViewIcon = () => (
  <SmallSvg>
    <rect x="1" y="1" width="22" height="22" fill="#fbfbfb" stroke="#8d9299" strokeWidth="1.4" />
    <rect x="1.5" y="1.5" width="21" height="3" fill="#a9b2bd" />
    <rect x="1.5" y="4.5" width="21" height="2.5" fill="#dcd8c8" />
    <rect x="7" y="8" width="10" height="14.5" fill="#f1ecd9" stroke="#c3beaa" strokeWidth="0.8" />
    <path d="M9 11H13M10 14.5H15M10 18H15" stroke="#555" strokeWidth="1.4" />
    <path d="M3 10H5M3 14H5M19 10H21" stroke="#9db4cc" strokeWidth="1.2" />
  </SmallSvg>
);

const ContentViewIcon = () => (
  <SmallSvg>
    <rect x="3" y="0.5" width="12" height="14" fill="#fff" stroke="#b4b4b4" />
    <path d="M1 9L4 6H12L13 3H20V20H1Z" fill="url(#folder)" stroke="#b9923c" />
    <path d="M1 20L5 9H13V20Z" fill="#e3b54c" />
    <PageShape x={12} y={9} w={11} h={15} fold={4} />
    <path d="M14.5 15H20M14.5 18H20M14.5 21H20" stroke="#2f7cc8" strokeWidth="1.4" />
  </SmallSvg>
);

const RestartIcon = () => (
  <SmallSvg>
    <path d="M3 11C4 4 11 2 15 5L15 2L21 7L15 12V9C11 7 6 8 3 11Z" fill="#9e9e9e" />
    <path d="M21 13C20 20 13 22 9 19L9 22L3 17L9 12V15C13 17 18 16 21 13Z" fill="#b2b2b2" />
  </SmallSvg>
);

const PlayIcon = () => (
  <SmallSvg>
    <path d="M8 4H10L17 12L10 20H8Z" fill="#55d23c" stroke="#258f1c" strokeWidth="1.2" />
  </SmallSvg>
);

const StopServiceIcon = () => (
  <SmallSvg>
    <rect x="4.5" y="4.5" width="15" height="15" rx="1.5" fill="#8d8d8d" stroke="#6f6f6f" />
  </SmallSvg>
);

const WebPlatformIcon = () => (
  <SmallSvg>
    <circle cx="10" cy="12" r="7.5" fill="#a5460e" stroke="#4c2412" />
    <circle cx="8" cy="9" r="4" fill="#e08a3e" opacity="0.6" />
    <path d="M10 7V17" stroke="#fff" strokeWidth="1.6" />
    <path d="M7 13H13L10 17Z" fill="#fff" />
  </SmallSvg>
);

function Caret({ className = "text-black" }: IconProps) {
  return (
    <svg width="8" height="5" viewBox="0 0 8 5" className={`shrink-0 ${className}`} aria-hidden="true">
      <path d="M0 0H8L4 5Z" fill="currentColor" />
    </svg>
  );
}

function Crumb() {
  return (
    <svg width="7" height="12" viewBox="0 0 7 12" className="shrink-0" aria-hidden="true">
      <path d="M0 0L7 6L0 12Z" fill="#000" />
    </svg>
  );
}

/* ---------- page data ---------- */

type Feature = { label: string; Icon: () => ReactNode };

const management: Feature[] = [
  { label: "Délégation des\nfonctionnalités", Icon: DelegationIcon },
  { label: "Éditeur de\nconfiguration", Icon: ConfigEditorIcon },
  { label: "Shared\nConfiguration", Icon: SharedConfigIcon },
];

const iis: Feature[] = [
  { label: "Authentification", Icon: AuthIcon },
  { label: "Certificats de\nserveur", Icon: CertificateIcon },
  { label: "CGI", Icon: CgiIcon },
  { label: "Compression", Icon: CompressionIcon },
  { label: "Document par\ndéfaut", Icon: DefaultDocIcon },
  { label: "En-têtes de\nréponse HTTP", Icon: HeadersIcon },
  { label: "Exploration de\nrépertoire", Icon: BrowseIcon },
  { label: "Filtrage des\ndemandes", Icon: FilterRequestsIcon },
  { label: "Journalisation", Icon: JournalIcon },
  { label: "Mappages de\ngestionnaires", Icon: MappingIcon },
  { label: "Mise en cache\nde sortie", Icon: CacheIcon },
  { label: "Modules", Icon: ModulesIcon },
  { label: "Pages d'erreurs", Icon: ErrorPagesIcon },
  { label: "Paramètres\nFastCGI", Icon: HeadersIcon },
  { label: "PHP Manager", Icon: PhpIcon },
  { label: "Processus de\ntravail", Icon: WorkerIcon },
  { label: "Restrictions\nISAPI et CGI", Icon: RestrictionsIcon },
  { label: "Types MIME", Icon: MimeIcon },
];

type TreeNode = { label: string; indent: string; state: "open" | "closed" | "leaf"; icon: ReactNode; selected?: boolean };

const tree: TreeNode[] = [
  { label: "Page de démarrage", indent: "pl-[6px]", state: "leaf", icon: <StartPageIcon /> },
  { label: "WEBSERVER2K25 (WEBSERVER2K25\\Administrateur)", indent: "pl-[6px]", state: "open", icon: <ServerIcon />, selected: true },
  { label: "Pools d'applications", indent: "pl-[35px]", state: "leaf", icon: <PoolsIcon /> },
  { label: "Sites", indent: "pl-[35px]", state: "open", icon: <FolderIcon site /> },
  { label: "MonWordPress", indent: "pl-[64px]", state: "open", icon: <StoppedSiteIcon /> },
  { label: "wp-admin", indent: "pl-[93px]", state: "closed", icon: <FolderIcon /> },
  { label: "wp-content", indent: "pl-[93px]", state: "closed", icon: <FolderIcon /> },
  { label: "wp-includes", indent: "pl-[93px]", state: "closed", icon: <FolderIcon /> },
];

/* ---------- panels ---------- */

function Expander({ state }: { state: TreeNode["state"] }) {
  return (
    <svg width="26" height="27" viewBox="0 0 26 27" className="shrink-0" aria-hidden="true">
      {state === "leaf" && <path d="M9.5 14.5H26M9.5 14V27" fill="none" stroke="#8a8a8a" strokeDasharray="1 1" />}
      {state !== "leaf" && <path d="M22 14.5H26" stroke="#8a8a8a" strokeDasharray="1 1" />}
      {state === "open" && <path d="M4 12L9.5 17.5L15 12" fill="none" stroke="#333" strokeWidth="2.4" />}
      {state === "closed" && <path d="M7 9L12.5 14.5L7 20" fill="none" stroke="#999" strokeWidth="2.2" />}
    </svg>
  );
}

function TreeRow({ node }: { node: TreeNode }) {
  return (
    <li className={`relative flex h-[27px] items-center ${node.indent}`} role="treeitem" aria-selected={!!node.selected}>
      <Expander state={node.state} />
      <button
        className={
          node.selected
            ? "flex h-[26px] items-center gap-[7px] border border-[#999] bg-[#d9d9d9] pr-1"
            : "flex h-[27px] items-center gap-2"
        }
      >
        {node.icon}
        <span>{node.label}</span>
      </button>
      {node.selected && (
        <span className="pointer-events-none absolute -top-[5px] -left-[2px] h-[38px] w-[485px] border-[5px] border-[#ed1c24]" />
      )}
    </li>
  );
}

function Separator() {
  return <span className="h-6 w-[2px] shrink-0 bg-[#c9c8b8]" />;
}

function FeatureGroup({ title, items, selected, onSelect }: {
  title: string;
  items: Feature[];
  selected: string;
  onSelect: (label: string) => void;
}) {
  return (
    <section>
      <div className="mb-[7px] flex h-[23px] items-center gap-2 pr-[10px] pl-[18px]">
        <h2 className="text-[#2a3f9f]">{title}</h2>
        <span className="h-[2px] flex-1 bg-[#c9d4ee]" />
        <button aria-label={`Réduire ${title}`} className="px-1">
          <svg width="12" height="9" viewBox="0 0 12 9">
            <path d="M1.5 8L6 3L10.5 8" fill="none" stroke="#0a3a9e" strokeWidth="3.2" />
          </svg>
        </button>
      </div>
      <div className="flex flex-wrap gap-x-[2px] gap-y-[11px] pl-px">
        {items.map(({ label, Icon }) => (
          <button
            key={label}
            onClick={() => onSelect(label)}
            className={`flex w-[137px] flex-col items-center self-start pb-px leading-[23px] ${
              label === selected
                ? "border border-dotted border-black bg-[#cce8ff] outline-[5px] outline-[#ed1c24]"
                : "border border-transparent"
            }`}
          >
            <Icon />
            <span className="mt-[5px] whitespace-pre">{label}</span>
          </button>
        ))}
      </div>
    </section>
  );
}

function ActionItem({ icon, label, disabled = false }: { icon?: ReactNode; label: string; disabled?: boolean }) {
  return (
    <li className="flex min-h-[30px] items-center gap-[12px] pl-[7px]">
      <span className="w-6 shrink-0">{icon}</span>
      {disabled ? (
        <button disabled className="text-[#a9a9a9]">{label}</button>
      ) : (
        <a href="#" className="whitespace-pre text-[#1a73d9]">{label}</a>
      )}
    </li>
  );
}

function ActionRule() {
  return <li role="separator" className="mx-1 my-[3px] h-px bg-linear-to-r from-transparent via-[#888] via-15% to-[#888]" />;
}

function ConnectionsPanel() {
  return (
    <aside className="ml-px flex w-[537px] shrink-0 flex-col border-2 border-[#a3a3a3] bg-white">
      <h2 className="flex h-[34px] shrink-0 items-center bg-[#bab8ba] pl-[9px] font-bold">Connexions</h2>
      <div className="flex h-[37px] shrink-0 items-center gap-[9px] border-b-2 border-[#6b6a8c] bg-linear-to-b from-[#fbfbfb] to-[#e2e0e1] pl-[2px]">
        <button aria-label="Se connecter" className="flex items-center gap-1">
          <ConnectIcon />
          <Caret />
        </button>
        <button aria-label="Enregistrer" disabled><SaveIcon /></button>
        <Separator />
        <button aria-label="Monter" disabled><UpIcon /></button>
        <Separator />
        <button aria-label="Supprimer la connexion"><ConnectIcon remove /></button>
      </div>
      <ul role="tree" className="-ml-px">
        {tree.map((node) => (
          <TreeRow key={node.label} node={node} />
        ))}
      </ul>
    </aside>
  );
}

function HomePanel() {
  const [filter, setFilter] = useState("");
  const [group, setGroup] = useState("Zone");
  const [selected, setSelected] = useState("Authentification");

  return (
    <main className="flex min-w-0 flex-1 flex-col">
      <div className="flex flex-1 flex-col border-2 border-[#a3a3a3] bg-white px-[18px] pt-[16px] pb-[17px]">
        <div className="flex h-[48px] items-center gap-[26px]">
          <svg width="48" height="48" viewBox="0 0 48 48" aria-hidden="true">
            <GlobeShape cx={13} cy={14} r={14} />
            <TowerShape x={23} y={5} />
          </svg>
          <h1 className="pb-1 text-[27px] leading-[36px]">Page d'accueil de WEBSERVER2K25</h1>
        </div>
        <div className="mt-[11px] flex flex-1 flex-col border border-[#e0e0e0]">
          <div className="flex h-[45px] items-center border-b-2 border-[#6b6a85] bg-linear-to-b from-[#fbfbfb] to-[#e1dfe0] pl-[10px]">
            <label htmlFor="filter" className="w-[61px]">Filtrer :</label>
            <div className="flex h-[35px] w-[182px] items-center bg-white">
              <input
                id="filter"
                value={filter}
                onChange={(e) => setFilter(e.target.value)}
                className="h-full min-w-0 flex-1 px-1 outline-none"
              />
              <button aria-label="Filtres récents" className="px-[6px]"><Caret /></button>
            </div>
            <button disabled className="ml-[5px] flex w-[124px] items-center gap-1 text-[#8d8d8d]">
              <FunnelIcon />
              <span className="flex-1 text-left">Atteindre</span>
              <Caret className="text-[#9a9a9a]" />
            </button>
            <button className="ml-2 flex w-[143px] items-center gap-1">
              <ShowAllIcon />
              Afficher tout
            </button>
            <Separator />
            <label htmlFor="group" className="ml-[6px] w-[129px]">Regrouper par :</label>
            <div className="relative h-[35px] w-[207px]">
              <select
                id="group"
                value={group}
                onChange={(e) => setGroup(e.target.value)}
                className="h-full w-full appearance-none bg-white pl-[6px]"
              >
                <option>Aucun regroupement</option>
                <option>Zone</option>
                <option>Catégorie</option>
              </select>
              <span className="pointer-events-none absolute inset-y-0 right-[6px] flex items-center"><Caret /></span>
            </div>
            <button aria-label="Affichage" className="ml-1 flex items-center gap-1">
              <ViewIcon />
              <Caret />
            </button>
          </div>
          <div className="flex flex-col gap-4 pt-[2px]">
            <FeatureGroup title="Gestion" items={management} selected={selected} onSelect={setSelected} />
            <FeatureGroup title="IIS" items={iis} selected={selected} onSelect={setSelected} />
          </div>
        </div>
      </div>
      <div role="tablist" className="flex h-[41px] shrink-0 items-center gap-1 pr-2 pb-px pl-2">
        <button role="tab" aria-selected="true" className="flex h-[31px] items-center gap-1 border-2 border-[#2f8fdf] bg-white pr-[9px] pl-[2px]">
          <FeaturesViewIcon />
          Affichage des fonctionnalités
        </button>
        <button role="tab" aria-selected="false" className="flex h-[31px] items-center gap-1">
          <ContentViewIcon />
          Affichage du contenu
        </button>
      </div>
    </main>
  );
}

function ActionsPanel() {
  return (
    <aside className="flex w-[300px] shrink-0 flex-col border-2 border-[#a3a3a3] bg-linear-to-r from-[#fcfcfc] to-[#eaeaea]">
      <h2 className="flex h-[34px] shrink-0 items-center bg-[#bab8ba] pl-[10px] font-bold">Actions</h2>
      <ul className="pt-[6px] leading-[23px]">
        <ActionItem label="Ouvrir la fonctionnalité" />
        <ActionRule />
        <li className="flex h-[30px] items-center pl-[43px] font-bold">Gérer le serveur</li>
        <ActionItem icon={<RestartIcon />} label="Redémarrer" disabled />
        <ActionItem icon={<PlayIcon />} label="Démarrer" />
        <ActionItem icon={<StopServiceIcon />} label="Arrêter" disabled />
        <ActionRule />
        <ActionItem label={"Afficher les pools\nd'applications"} />
        <ActionItem label="Afficher les sites" />
        <ActionRule />
        <ActionItem icon={<WebPlatformIcon />} label={"Obtenir de nouveaux\ncomposants Web Platform"} />
        <ActionRule />
        <ActionItem icon={<HelpIcon />} label="Aide" />
      </ul>
    </aside>
  );
}

export default function App() {
  return (
    <div className="h-screen bg-[#0078d7] pr-[2px] font-['Open_Sans','Noto_Sans',sans-serif] text-[17px] leading-[23px] text-[#111]">
      <SharedGradients />
      <div className="flex h-full flex-col border-t border-r border-b border-t-[#dfe6e6] border-r-black border-b-[#3a5088] bg-[#f6f6f6]">
        <header className="flex h-[35px] shrink-0 items-center bg-[#0063b1] text-white">
          <StartPageIcon className="ml-[2px]" />
          <h1 className="ml-[7px] flex-1 text-[17px]">Gestionnaire des services Internet (IIS)</h1>
          <button aria-label="Réduire" className="flex h-full w-[70px] items-center justify-center">
            <svg width="16" height="16" viewBox="0 0 16 16"><path d="M0 7.5H16" stroke="#fff" /></svg>
          </button>
          <button aria-label="Restaurer" className="flex h-full w-[70px] items-center justify-center">
            <svg width="16" height="16" viewBox="0 0 16 16" fill="none" stroke="#fff" strokeWidth="1.3">
              <rect x="1" y="4" width="11" height="11" rx="1.5" />
              <path d="M4 1.5H12a2.5 2.5 0 0 1 2.5 2.5V12" />
            </svg>
          </button>
          <button aria-label="Fermer" className="flex h-full w-[70px] items-center justify-center">
            <svg width="16" height="16" viewBox="0 0 16 16"><path d="M0.5 0.5L15.5 15.5M15.5 0.5L0.5 15.5" stroke="#fff" strokeWidth="1.3" /></svg>
          </button>
        </header>

        <nav className="flex h-[50px] shrink-0 items-center border-y border-[#a3bcd8] bg-[#b9cfe9] pb-[3px]">
          <div className="ml-[6px] flex h-[40px] w-[82px] items-center justify-between rounded-[20px] border-t-2 border-b-2 border-t-[#8fa9c8] border-b-[#dbe7f5] bg-[#acc3df] px-[7px]">
            <button aria-label="Précédent">
              <svg width="18" height="18" viewBox="0 0 18 18" fill="none" stroke="#6e7377" strokeWidth="2"><path d="M18 9H1.5M9 1L1.5 9L9 17" /></svg>
            </button>
            <button aria-label="Suivant" disabled>
              <svg width="18" height="18" viewBox="0 0 18 18" fill="none" stroke="#8f9aa6" strokeWidth="2"><path d="M0 9H16.5M9 1L16.5 9L9 17" /></svg>
            </button>
          </div>
          <div className="ml-[28px] flex h-[34px] flex-1 items-center border-2 border-[#a5bcd8] bg-[#eaf1fa] pb-px pl-[7px]">
            <ServerIcon />
            <span className="ml-[11px] flex items-center gap-[17px]">
              <Crumb />
              <a href="#">WEBSERVER2K25</a>
              <Crumb />
            </span>
          </div>
          <div className="flex items-center gap-[10px] pr-[10px] pb-[3px] pl-[11px]">
            <button aria-label="Actualiser"><RefreshIcon /></button>
            <button aria-label="Arrêter" disabled><StopIcon /></button>
            <button aria-label="Accueil" disabled><HomeIcon /></button>
            <span className="ml-[2px] flex items-center gap-1">
              <span className="h-5 w-[2px] bg-[#eef3f9]" />
              <button aria-label="Aide" className="flex items-center gap-[9px]">
                <HelpIcon />
                <Caret />
              </button>
            </span>
          </div>
        </nav>

        <div role="menubar" className="flex h-[37px] shrink-0 items-center gap-[30px] bg-linear-to-b from-white to-[#e3e1e2] pb-[3px] pl-[21px]">
          <button role="menuitem">Fichier</button>
          <button role="menuitem">Affichage</button>
          <button role="menuitem">Aide</button>
        </div>

        <div className="flex min-h-0 flex-1 gap-[9px]">
          <ConnectionsPanel />
          <HomePanel />
          <ActionsPanel />
        </div>

        <footer className="mt-[3px] flex h-[32px] shrink-0 items-center justify-between bg-linear-to-r from-[#e2e0e1] to-[#fdfdfd] pr-[16px] pl-[6px]">
          <span role="status">Prêt</span>
          <ServerIcon />
        </footer>
      </div>
    </div>
  );
}
